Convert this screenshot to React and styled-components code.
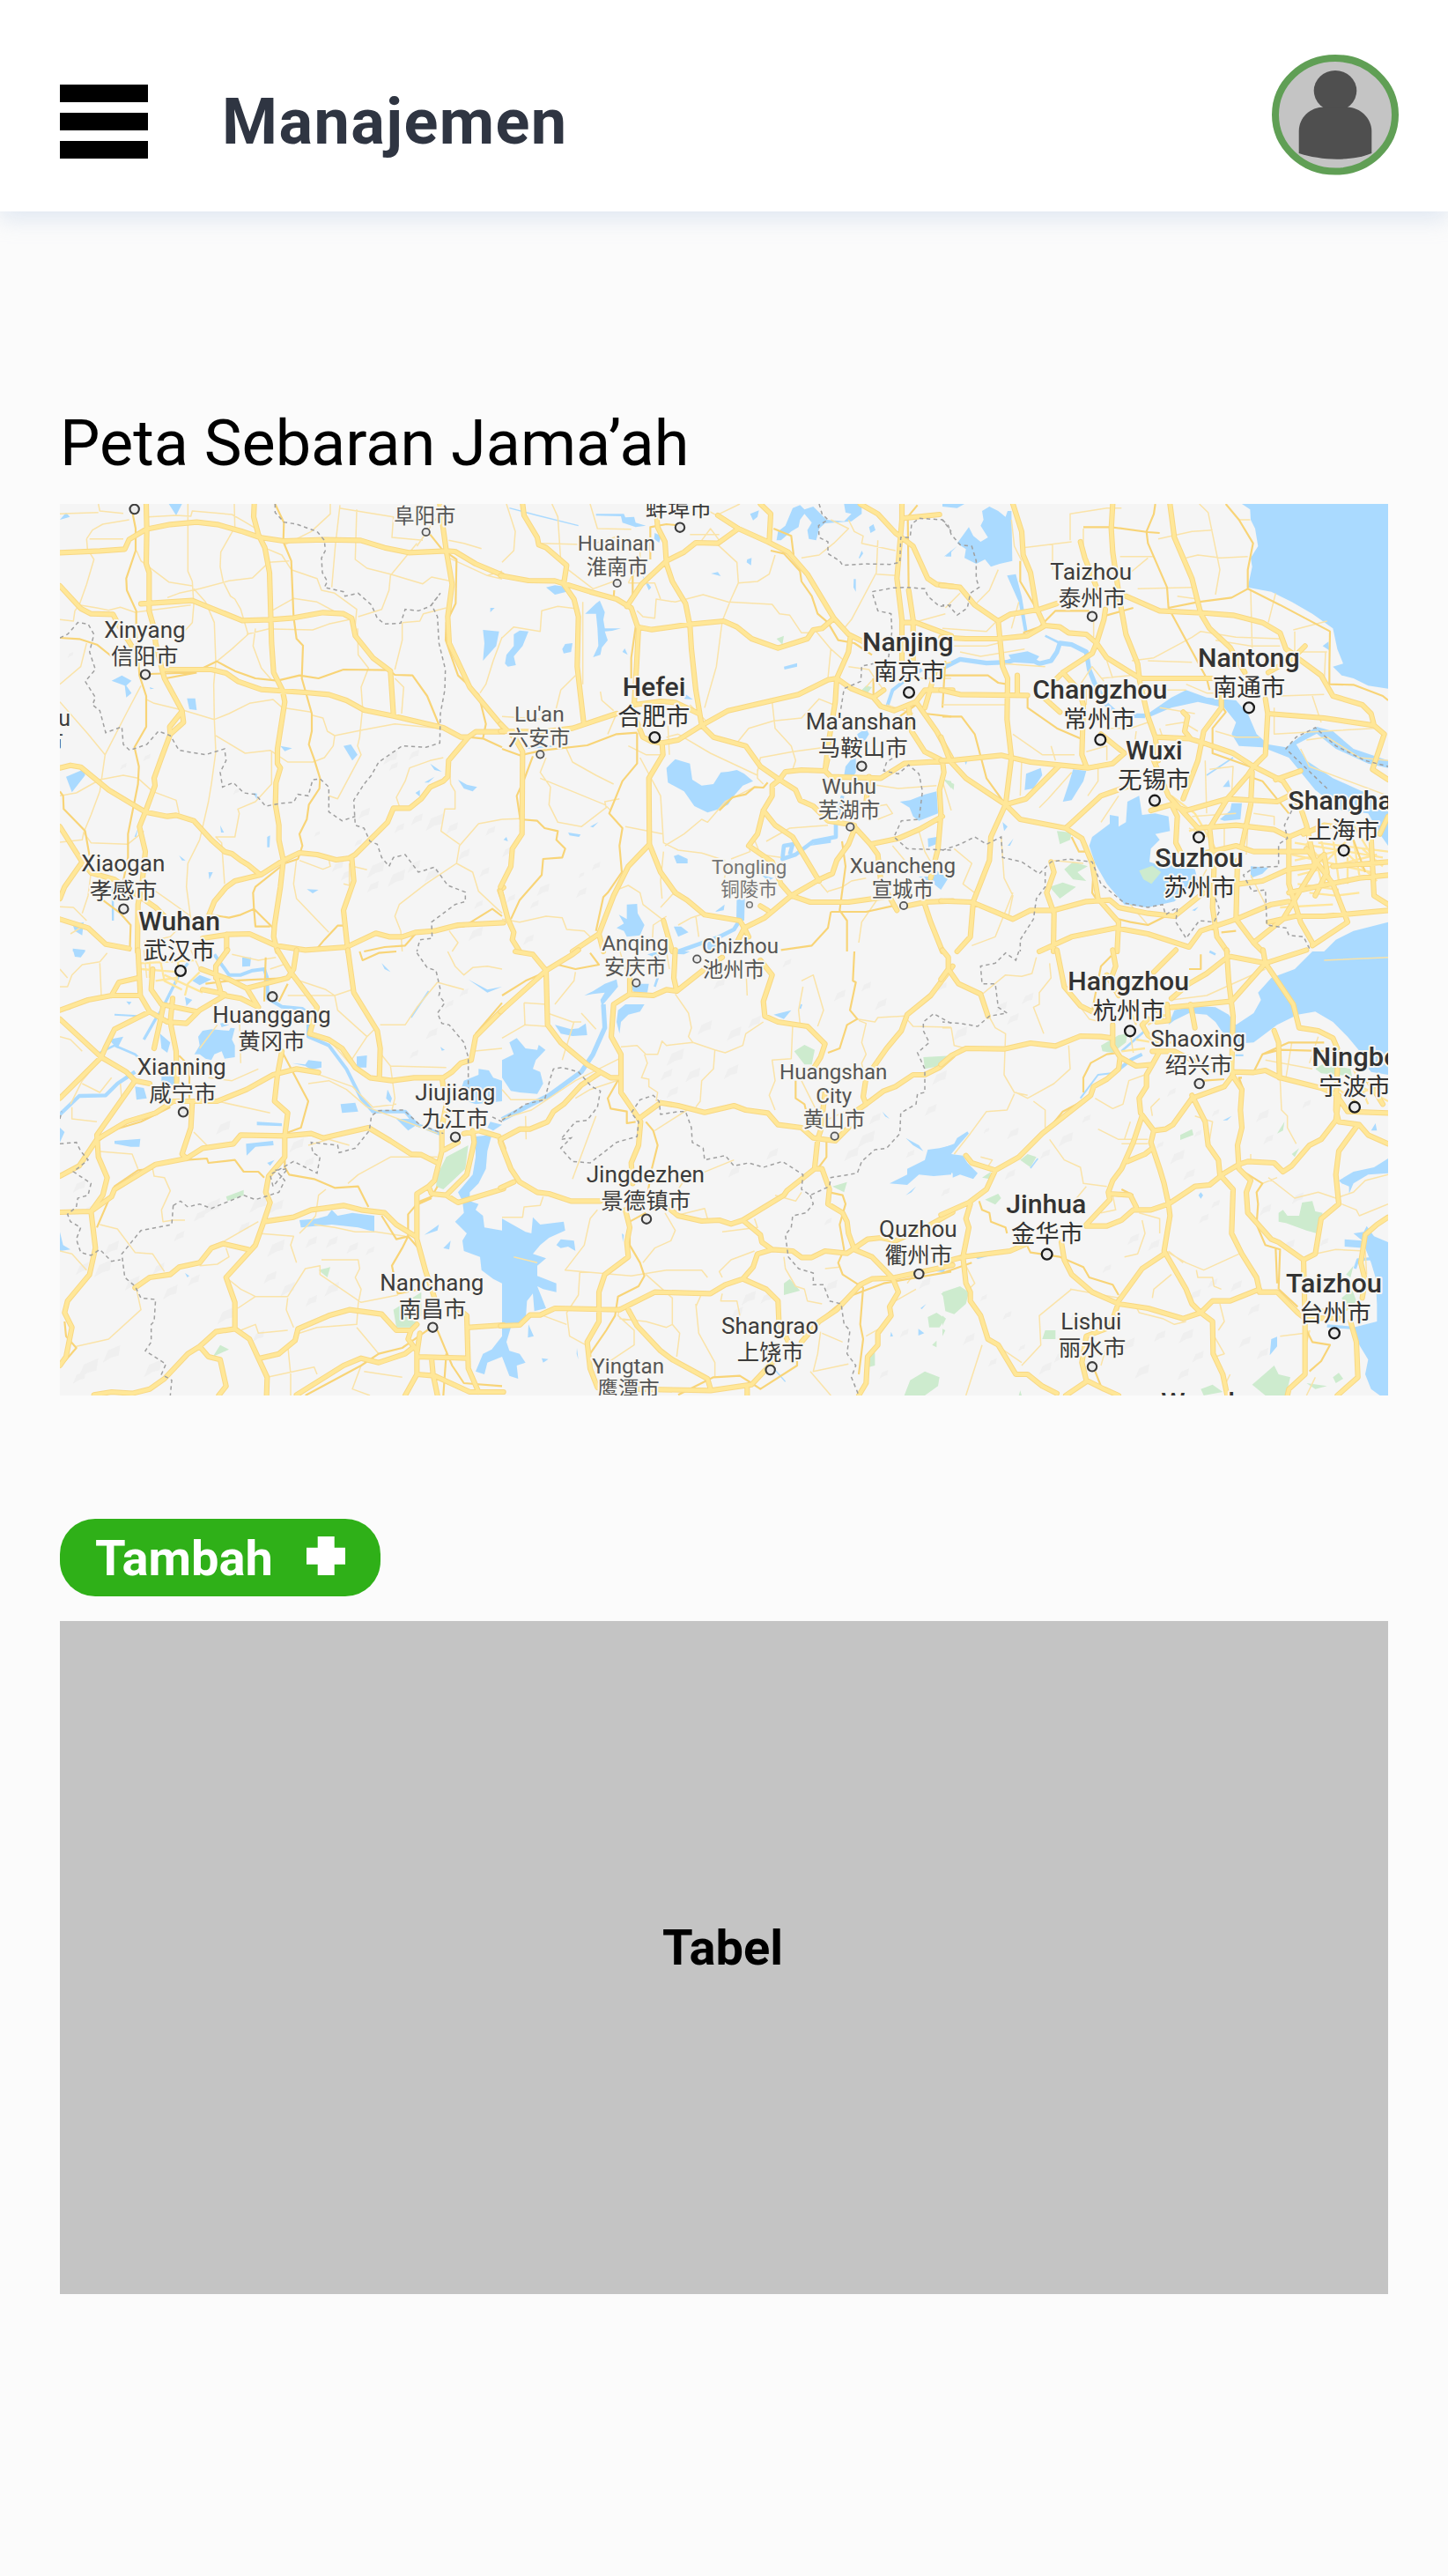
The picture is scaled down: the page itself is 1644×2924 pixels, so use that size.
import React from 'react';
import styled, { createGlobalStyle } from 'styled-components';

const GlobalStyle = createGlobalStyle`
  * { box-sizing: border-box; }
  body { margin: 0; background: #fbfbfb; font-family: Roboto, "Liberation Sans", sans-serif; color: #000; }
`;

const Page = styled.div`
  width: 1644px;
  min-height: 2924px;
  background: #fbfbfb;
  overflow: hidden;
`;

const Header = styled.header`
  height: 240px;
  padding: 0 56px 0 68px;
  display: flex;
  align-items: flex-start;
  background: #fff;
  box-shadow: 0 8px 24px rgba(181, 200, 228, 0.4);
`;

const MenuButton = styled.button`
  width: 100px;
  margin-top: 96px;
  padding: 0;
  border: 0;
  background: none;
  display: flex;
  flex-direction: column;
  gap: 12px;
`;

const MenuBar = styled.span`
  height: 20px;
  background: #000;
`;

const Title = styled.h1`
  margin: 97px 0 0 84px;
  font-size: 72px;
  line-height: 84px;
  font-weight: 700;
  letter-spacing: 1.44px;
  color: #2f3542;
`;

const Avatar = styled.svg`
  margin: 62px 0 0 auto;
  width: 144px;
  height: 137px;
`;

const Main = styled.main`
  padding: 222px 68px 0;
  display: flex;
  flex-direction: column;
  align-items: flex-start;
`;

const SectionTitle = styled.h2`
  margin: 0 0 26px;
  font-size: 72px;
  line-height: 84px;
  font-weight: 400;
  white-space: nowrap;
`;

const MapView = styled.svg`
  display: block;
  width: 1508px;
  height: 1012px;
  overflow: hidden;
  background: #f5f5f5;
`;

const AddButton = styled.button`
  width: 364px;
  height: 88px;
  margin: 140px 0 28px;
  padding: 2px 40px 0;
  display: flex;
  align-items: center;
  justify-content: space-between;
  border: 0;
  border-radius: 40px;
  background: #2fb018;
  color: #fff;
  font: 700 56px/66px Roboto, sans-serif;
`;

const PlusIcon = styled.svg`
  width: 44px;
  height: 44px;
  margin-bottom: 6px;
`;

const TablePanel = styled.section`
  width: 1508px;
  height: 764px;
  display: flex;
  align-items: center;
  justify-content: center;
  background: #c4c4c4;
  font-size: 56px;
  font-weight: 700;
  line-height: 66px;
  padding: 0 3px 22px 0;
`;

const Water = styled.path`
  fill: #aadaff;
`;
const River = styled.path`
  fill: none;
  stroke: #aadaff;
  stroke-width: ${(p) => p.$w || 12};
  stroke-linejoin: round;
`;
const Park = styled.path`
  fill: #cdebce;
`;
const Ridge = styled.path`
  fill: #efefef;
`;
const Road = styled.path`
  fill: none;
  stroke: ${(p) => p.$color};
  stroke-width: ${(p) => p.$w};
  stroke-linejoin: round;
  stroke-linecap: ${(p) => p.$cap || 'butt'};
`;
const Border = styled.path`
  fill: none;
  stroke: #a0a0a0;
  stroke-width: 4.5;
  stroke-dasharray: 13 11;
`;

const SIZES = {
  big: { latin: 29, zh: 27.3, weight: 500, color: '#333', r: 6.4, ring: 2.3 },
  mid: { latin: 25, zh: 25.4, weight: 400, color: '#3c3c3c', r: 5.7, ring: 2.1 },
  small: { latin: 23.5, zh: 23.5, weight: 400, color: '#555', r: 4.7, ring: 1.8 },
  tiny: { latin: 22, zh: 21.4, weight: 400, color: '#757575', r: 3.8, ring: 1.5 },
};

const LabelText = styled.text`
  font-family: Roboto, "Noto Sans CJK SC", sans-serif;
  font-size: ${(p) => p.$size}px;
  font-weight: ${(p) => p.$weight};
  fill: ${(p) => p.$color};
  stroke: #f7f6f2;
  stroke-width: 4px;
  stroke-linejoin: round;
  paint-order: stroke;
`;
const Ring = styled.circle`
  fill: #ececec;
  stroke: ${(p) => p.$color};
  stroke-width: ${(p) => p.$ring}px;
`;

// Map sheets: each holds its own origin and is drawn at three units per pixel.
const SHEETS = [
  {
    x: 60, y: 570,
    water: 'M24 60L45 35 58 50ZM395 6L440 6 420 45ZM200 608L235 590 268 608 250 625 268 650 250 665 245 625ZM457 668L485 668 490 708 465 705ZM1465 435L1520 440 1510 490 1465 540 1470 480ZM45 935L105 910 110 930 65 988ZM775 830L815 838 790 848ZM990 830L1015 825 1038 860 1020 880ZM1380 945L1410 962 1445 970 1430 985 1400 975ZM1235 990L1250 980 1250 1003ZM1265 955L1300 935 1280 955ZM1285 890L1325 918 1300 912ZM865 1318L905 1320 885 1332ZM530 1260L545 1260 533 1285ZM730 1140L740 1135 738 1175 730 1175ZM570 1100L583 1125 573 1125ZM430 1203L452 1220 440 1220ZM200 1300L208 1310 208 1425 201 1425ZM68 1440L105 1430 100 1475 75 1460ZM68 1520L110 1525 110 1530 68 1530ZM1490 360L1505 360 1490 375ZM330 630L345 635 332 637ZM682 990L695 992 695 1012ZM278 1140L290 1110 284 1140Z',
    highway: 'M24 172L160 166 245 160 260 127 318 92 400 76 490 68 560 76 640 98 705 120 785 132 925 128 1048 130 1130 155 1212 172 1340 166 1370 168 1440 210 1530 248M318 6L320 92 318 210 328 240 328 370 345 430 350 480 372 570 380 600 440 710 445 750 400 790 370 870 345 940 348 965 315 1055 295 1105 315 1190 305 1290 290 1370 288 1530M440 712L398 765 400 790M686 6L684 50 700 110 722 155 738 240 745 480 752 580 782 640 790 680 765 840 765 890 775 905 760 955 758 1030 770 1100 770 1150 785 1220 775 1310 755 1440 752 1480 765 1530M300 346L475 335 645 403 742 400 820 394 920 376 990 380 1018 395 1030 455 1090 530 1150 575 1160 725M24 285L95 362 130 380 205 382 225 420 275 500M372 570L540 570 590 582 630 610 710 638 860 648 940 655 1000 675 1060 708 1160 728 1330 768 1390 800 1415 800 1440 782 1535 782M1318 6L1340 165 1360 280 1345 390 1350 480 1420 630 1535 768M1415 800L1348 880 1345 935 1330 950 1285 970 1255 1010 1215 1042 1160 1042 1140 1090 1030 1200 1010 1212 965 1218 900 1200 840 1194 785 1220 710 1268 620 1290 590 1312 550 1360 530 1410M24 905L60 896 95 902 190 980 315 1055 390 1070 420 1066 480 1085 540 1150 585 1190 610 1197 640 1220 665 1235 705 1268M24 1105L100 1225 40 1310 24 1350M100 1225L130 1262 210 1285 350 1380 380 1410M24 1420L120 1450 180 1505 260 1520M510 1485L595 1472 670 1470 760 1510 860 1525 1000 1515 1100 1468 1145 1480 1190 1480 1235 1465 1300 1460 1380 1440 1535 1432M1018 1210L1025 1290 990 1390 1005 1530M592 1472L592 1530M1535 1312L1522 1322 1530 1345',
    main: 'M272 40L282 90 282 165 250 260 252 300 284 370 284 440 295 590 318 660 318 765 278 835 293 900 290 960 256 1130 256 1210 240 1290M757 6L787 70 785 135 812 200 820 390 830 465 852 488 848 600 882 720 882 780 872 825 890 875 910 940 908 975 872 1030 865 1080 840 1130 850 1170 835 1215 790 1230 690 1310 682 1330 685 1385 750 1450M24 462L90 466 150 485 200 525M330 585L480 580 558 542 620 575 690 600 765 608 840 590 905 600 990 570 1145 572 1165 588 1225 590 1275 660 1318 765M385 600L490 580M1285 110L1325 160 1375 195 1372 345 1340 410 1338 470 1380 590 1450 655 1475 755 1465 805M1415 800L1465 805 1530 835M24 985L35 1000 37 1045 110 1120 125 1205M685 1385L640 1405 600 1415 540 1405M685 1385L690 1445 740 1445M900 1520L925 1490 970 1442 990 1442M1530 1410L1497 1385 1400 1445 1340 1450M170 1355L230 1400 265 1440 262 1530M1060 1530L1130 1515 1200 1510 1235 1470',
    minor: 'M24 40L60 38 155 35M155 6L160 30 240 38M115 125L135 95 170 75 260 60M115 125L118 160 140 195 115 280 90 350 150 360 190 368 230 358 280 375 470 350M125 125L240 125M285 165L300 200 395 272 475 285M325 50L420 45 470 48 475 30 610 42 650 65 700 95M460 6L460 235 475 270 480 350 475 410 430 460M390 325L430 310 500 295 600 268 680 258 725 215 735 205 805 200M618 6L620 85 572 170 570 220 580 270 605 320 620 330 640 365 665 450 610 500 555 545 548 620 550 740 555 850 540 960 530 1020 500 1150 460 1230 455 1310 470 1420M480 295L520 340 550 410 555 545M945 6L945 40 880 100 790 145M720 155L780 180 812 230 900 260 915 300 960 310 1035 365 1030 420M978 10L962 150 950 290M1035 25L1030 195 1070 225 1150 245 1260 278 1290 255 1360 270M975 20L1160 50 1155 120 1260 130M1240 140L1150 250 1145 300 1120 365 1040 390M1348 130L1400 140 1460 158M1240 150L1285 85 1310 50M1350 190L1480 250 1530 262M742 430L660 450M690 430L682 490 710 565 745 605M750 432L885 435 940 415 1010 400M745 370L820 328 900 340 965 375M1190 410L1190 470 1165 570M1190 410L1250 405 1262 380 1340 360M1038 430L1040 520 1075 565 1050 630 1055 700 1045 800 1038 830 1050 860 970 1010 940 1000M1165 600L1195 630 1188 720M782 700L880 715M782 700L750 672 670 685 600 720 550 740 450 710 345 685 315 670M24 680L120 790 178 860 160 985 130 1065 105 1125 130 1160 255 1165 310 1120M24 1000L80 990 160 945 240 930 290 940 340 985 420 1015 430 1060M300 625L250 720 178 860M24 620L95 560 115 480M555 795L655 855 740 845 800 885 885 885 925 870 955 830 960 795 1060 775 1165 755 1315 770M882 725L920 735 935 780 960 795M745 850L745 960 690 1020 630 1045 635 1060 620 1140 555 1140 575 1160 585 1300M1530 1080L1450 1095 1385 1170 1375 1230 1270 1300 1180 1370 1165 1410 1185 1460 1190 1530M1330 870L1285 880 1215 905 1200 950 1170 1005 1180 1035M1350 890L1355 960 1370 985 1370 1045 1335 1045 1322 1120 1385 1165M1375 1230L1430 1260 1450 1325 1530 1400M830 1215L820 1300 830 1350 940 1465M840 1220L920 1250 945 1240 940 1215M1020 1240L1070 1252M990 1300L1010 1305 1010 1230M300 1290L400 1360 470 1410M24 1378L70 1380 115 1425M130 1262L120 1340 100 1400M24 1158L100 1150 105 1125M24 400L70 405 75 370 90 350M1530 460L1500 540 1475 620 1455 650M60 1470L110 1440 170 1500M310 1500L400 1480 440 1440M1350 1460L1380 1500 1360 1530M1480 250L1530 235',
    border: 'M757 6L757 35 787 68 830 75 900 100 925 130 928 165 915 190 918 240 935 270 925 290 990 305 995 320 1040 310 1085 350 1105 395 1130 415 1185 412 1200 365 1245 370 1285 355 1320 310 1290 350 1310 390 1315 480 1337 570 1335 640 1320 720 1318 820 1270 835 1190 830 1110 885 1085 930 1060 960 1025 1015 1030 1100 1060 1110 1080 1155 1105 1165 1120 1210 1145 1240 1160 1210 1200 1200 1245 1260 1300 1243 1345 1305 1405 1328 1405 1360 1370 1370 1290 1430 1292 1485 1250 1490 1240 1530M24 462L50 450 85 410 120 415 140 450 125 510 145 570 110 610 145 665 135 690 160 710 180 785 235 765 240 825 262 845 320 825 360 780 400 795 430 845 520 860 585 840 590 880 570 920 578 970 615 955 650 990 690 995 725 1035 780 1025 820 1022 835 995 870 1000 885 945 910 942 940 970 940 1055 985 1085 1030 1070',
    ridges: [[60, 520, 20], [240, 900, 22], [320, 870, 26], [625, 985, 22], [1150, 870, 50], [1230, 860, 36], [1160, 900, 30], [1060, 1060, 40], [970, 1240, 40], [1000, 1270, 40], [1040, 1160, 26], [1180, 1110, 34], [1240, 1080, 40], [1300, 1090, 60], [1360, 1110, 40], [1100, 1250, 60], [1170, 1280, 60], [1230, 1240, 44], [1090, 1310, 40], [1290, 1270, 50], [1400, 1200, 40], [1490, 1120, 34], [1470, 1260, 34], [1440, 1470, 50], [900, 1130, 20], [1450, 1370, 30]],
  },
  {
    x: 570, y: 570,
    water: 'M560 905L590 875 640 890 648 945 680 965 720 960 745 920 770 918 800 912 825 925 855 950 820 965 790 1000 770 1030 740 1045 700 1057 655 1035 620 985 565 955ZM320 40L415 40 420 52 450 50 455 70 490 80 455 85 410 70 405 48 320 46ZM520 105L542 115 535 138 518 125ZM845 40L875 28 870 50 855 62ZM835 195L850 190 848 215 833 205ZM712 243L735 238 745 252ZM935 130L940 100 965 80 990 20 1015 10 1030 25 1060 15 1085 40 1105 60 1165 65 1190 40 1170 35 1165 6 1225 6 1225 40 1190 65 1100 72 1080 90 1070 130 1045 125 1040 95 1055 70 1030 40 1015 60 1010 85 985 100 950 130ZM1250 85L1265 75 1272 95 1255 105ZM1215 190L1225 165 1230 175 1218 192ZM1198 262L1205 262 1205 305 1197 290ZM150 290L180 283 232 290 220 305 180 315ZM283 380L320 345 333 335 350 375 345 400 350 430 405 430 375 438 350 440 360 470 340 495 335 520 310 528 328 490 325 430 320 380ZM10 550L15 520 40 490 40 450 60 437 90 440 70 490 40 525 47 555 20 560ZM205 500L215 483 240 480 235 510 210 515ZM410 510L418 498 428 520ZM960 560L1005 548 1005 560 962 570ZM478 250L508 290 500 300ZM620 650L650 672 622 670ZM1190 875L1205 870 1205 920 1195 935 1165 930 1170 900ZM1210 790L1240 770 1250 790 1225 830 1215 820ZM1355 1020L1390 1015 1440 995 1480 985 1485 1060 1420 1085 1400 1070 1388 1040ZM1450 1145L1480 1140 1478 1165 1452 1175ZM1418 1275L1470 1275 1480 1255 1520 1280 1495 1320 1470 1300ZM585 1205L600 1200 632 1215 632 1230 595 1230ZM225 1125L268 1132 262 1140 230 1135ZM300 1105L328 1090 310 1108ZM5 1150L15 1140 20 1155ZM398 1405L425 1420 425 1370 460 1368 462 1400 485 1440 470 1475 425 1480 415 1460 390 1450 415 1435ZM585 1445L610 1445 635 1465 600 1480ZM725 1395L758 1370 755 1390ZM800 1320L828 1310 825 1425 798 1425ZM1530 165L1510 185 1530 185ZM885 1270L925 1280 905 1290ZM1080 1150L1120 1145 1120 1160 1050 1170ZM690 1500L720 1485 750 1530 690 1530Z',
    river: [['M1430 570L1375 605 1330 640 1310 700', 12], ['M1137 1095L1137 1140 1060 1155 1000 1200 955 1215 960 1170 990 1165 980 1200', 14], ['M812 1420L790 1455 740 1480 600 1530', 14], ['M25 20L120 45 260 80', 4], ['M1160 1000L1140 1080 1137 1100', 12], ['M80 838L180 830', 5]],
    park: 'M935 465L960 455 955 485ZM1225 640L1240 625 1260 630 1245 650ZM1505 945L1530 950 1530 975Z',
    highway: 'M70 6L75 45 120 120 125 145 150 155 220 215 210 280 245 330 260 390 256 560 278 750M-5 250L90 267 180 268 300 305 390 330 440 360 462 425 510 434 640 416 755 405 800 425 850 465 940 497 1040 465 1060 435 1090 430 1125 400M525 30L530 85 555 135 560 210 580 270 625 345 640 420 645 500 660 640 680 760M425 355L475 280 560 200 620 170 660 138 735 140 805 90M735 45L805 90 905 135 975 170 1040 245 1130 395 1180 450 1230 475M880 6L915 40 910 135M465 425L458 560 450 690M450 690L540 678 590 682 670 720M-5 780L140 782 240 770 390 720M-5 755L45 805 70 850 68 1130 35 1180 30 1240 -5 1310M-5 1325L20 1420 40 1465 35 1490 60 1530M680 760L600 810 545 820 510 815 480 800 460 750M680 760L770 710 900 680 1010 655 1110 605 1140 600 1180 510 1187 455M680 760L720 800 830 830 880 900 945 945 1000 980 1015 1015 1060 1035 1110 1085 1200 1100M545 820L548 860 500 940 502 1165 540 1260 590 1330 630 1355 690 1405 810 1425 825 1450 895 1415 985 1340 1080 1285 1125 1265 1140 1220 1180 1165 1200 1115M502 1165L430 1240 380 1340 330 1470 240 1530M945 945L920 965 920 1000 890 1050 870 1130 840 1170 920 1225 950 1300 985 1340 1050 1362 1180 1362 1300 1345M890 1050L930 1100 990 1140 1050 1240 1080 1290M945 945L965 918 1020 912 1100 915 1110 870M1100 915L1120 935 1290 940 1370 890 1535 880M1140 600L1135 680 1115 800 1100 915M1140 600L1190 635 1265 665 1300 640M1265 665L1290 695 1335 710 1410 680 1440 640 1535 640M1220 6L1280 40 1340 105 1400 150 1450 260 1480 280 1535 287M1362 6L1362 60 1345 260 1362 400 1362 540M1385 300L1400 400 1400 560M1362 410L1410 410 1530 455M1362 55L1490 42M1200 1105L1255 1165 1280 1200 1290 1290 1345 1390M1255 1165L1350 1145 1420 1115 1500 1070M1500 880L1505 920 1490 980 1495 1060 1485 1180 1460 1280M1440 1370L1460 1430 1500 1530M1380 1375L1440 1362 1535 1358M1385 700L1395 780 1440 850 1500 880M1410 680L1480 780 1530 870M1480 560L1440 700M1250 935L1240 1020M550 1425L580 1530M330 1470L345 1530M880 1375L905 1390M825 1450L800 1500M825 1450L840 1480',
    main: 'M0 840L60 862 140 845 290 828 390 790 460 785M105 865L75 945 50 1000 62 1080 120 1085 145 1110 190 1120 185 1150 215 1180 205 1210 140 1215 135 1270 60 1355 30 1420M460 785L460 890 410 950 365 1060 410 1110 400 1170 408 1260 360 1330 345 1345 320 1460M455 425L440 530 440 600M505 195L505 85 560 75 610 80M380 330L382 300M925 90L985 115 993 180M915 165L960 175 1015 235 1020 270 1055 320 1075 380 1110 410 1145 470 1200 480 1260 520M905 955L890 972 860 970 830 995 785 1005 740 1050M1158 1155L1165 1205 1170 1240 1150 1390 1175 1425 1175 1530M1120 1395L1240 1395 1330 1375M1120 1395L1110 1450 1055 1510 950 1525M445 330L445 240M1415 10L1382 50 1385 300M1440 720L1530 730M1410 690L1340 740M1265 600L1265 665M1510 540L1500 700',
    minor: 'M15 6L45 100 40 165 0 205M170 6L190 50 200 200M130 140L300 145 400 115M225 230L310 295 380 270M0 462L40 425 130 440 135 370 190 355 250 362M275 340L275 620M0 730L150 740 180 720 200 640 250 590M300 6L325 90 440 92M460 370L480 390 520 395 525 330 590 340 685 315 770 340 920 348 945 380 980 385 1020 445 1050 445M735 145L800 205 805 275 780 330 750 405 730 560 690 700M640 110L740 110M680 130L710 90 740 130M805 275L870 270 910 245 930 180M660 6L740 50M810 6L740 40M430 275L520 275 540 330M1120 60L1180 90 1130 140 1080 180 1020 190M1180 60L1200 100 1230 115 1225 140 1340 165M1280 130L1275 240 1190 400 1165 430M1275 245L1345 250M1070 440L1120 500 1165 540M1120 500L1110 600M335 645L340 675 380 710M390 720L360 790M215 830L240 885 320 930 380 960M150 870L130 920 165 970 160 1030 190 1090 270 1105 355 1040 350 1020 400 1010M130 940L240 985 350 1030 370 1050M420 1105L550 1130M470 870L540 1000 550 1160 600 1185 680 1195 760 1220M555 1170L620 1130 680 1080 700 1090 760 1020 860 970M600 790L710 855 870 930M640 690L700 750M800 820L840 770 925 745 1020 735 1080 670 1130 690M920 680L930 770 985 830 1000 880 990 910M870 920L880 870 990 850 1100 835M1250 960L1350 975 1480 965M900 1155L980 1110 1110 1100M780 1215L845 1190 840 1170M860 1150L880 1200 950 1210M550 1190L540 1290 545 1350M540 1380L595 1320M380 1325L430 1305 470 1330 480 1370 545 1420M510 1530L515 1440 560 1410M0 1420L60 1430 150 1410 205 1415 220 1455 280 1460 300 1480M770 1230L755 1290M660 1410L670 1480M690 1400L645 1415 600 1440M1110 1325L1160 1310 1190 1290 1240 1280M1280 1350L1225 1430 1215 1500M1085 1300L1110 1330M1340 770L1390 740M0 1080L60 1078M1300 560L1240 630M1310 690L1400 720M1500 950L1530 1050M1280 1080L1330 1060 1310 1030 1250 1040M1180 560L1250 570 1270 600 1300 640M470 140L470 200 430 275M560 800L600 790M565 760L570 860M430 830L490 860 540 860M1420 1120L1440 1190 1480 1260M1330 1170L1380 1230M870 910L870 940 890 960M1400 410L1510 380M1450 560L1530 545M1400 600L1530 600',
    border: 'M1080 6L1090 40 1110 60 1078 80 1080 120 1110 135 1110 175 1150 200 1160 215 1235 210 1320 212 1355 205 1358 120 1390 120 1395 75 1420 55 1500 60 1530 100M1530 350L1490 355 1450 320 1440 295 1380 290 1330 292 1260 305 1280 370 1325 380 1328 440 1315 540 1225 558 1222 610 1165 635 1150 730M1350 860L1310 885 1300 915 1350 925 1385 895 1420 925 1432 985 1420 1080 1360 1085 1335 1140 1380 1180 1530 1185',
    ridges: [[20, 1190, 40], [140, 1320, 44], [270, 1330, 36], [320, 1240, 30], [110, 1370, 30], [90, 1490, 36], [270, 1270, 20], [30, 1350, 30]],
  },
  {
    x: 1070, y: 570,
    water: 'M1020 6L1518 6 1518 635 1450 625 1400 600 1360 590 1330 560 1365 550 1345 500 1330 430 1260 380 1190 340 1120 305 1040 290 1055 220 1050 190 1075 150 1065 90 1050 60 1048 25ZM235 30L238 200 195 210 165 220 145 195 115 210 75 190 80 160 50 140 90 85 105 115 130 135 155 120 130 80 140 60 135 30 160 15 190 30 215 50 222 30ZM0 6L75 6 50 20 0 15ZM5 185L50 150 20 180ZM220 250L250 245 270 320 290 440 278 440 260 340ZM650 735L700 720 780 665 830 640 900 665 1000 675 1040 720 1070 790 1110 825 1170 835 1215 800 1275 765 1330 780 1400 840 1518 880 1518 905 1450 890 1340 840 1275 788 1205 825 1240 880 1330 940 1420 980 1518 1020 1518 1170 1490 1130 1450 1060 1360 1050 1270 980 1180 870 1090 835 1010 830 985 790 1000 750 960 700 870 680 780 700 710 730ZM500 1170L510 1140 570 1095 570 1065 600 1070 600 1105 625 1090 630 1020 670 1000 680 1065 725 1060 770 1070 775 1120 725 1130 740 1150 710 1180 705 1225 750 1240 780 1190 800 1230 860 1250 870 1290 830 1320 790 1360 700 1380 620 1370 560 1300 520 1230ZM280 980L285 925 335 905 340 930 310 975ZM410 1020L430 960 445 910 490 915 480 950 440 1015ZM945 1080L980 1050 985 1025 1020 1025 1015 1080 960 1085ZM955 970L975 945 980 970ZM1050 1280L1050 1240 1110 1245 1090 1265ZM1300 1530L1340 1490 1400 1460 1518 1430 1518 1530ZM1295 490L1315 475 1318 505ZM205 1090L222 1105 210 1120ZM222 1170L242 1145 230 1170ZM225 520L290 508 330 525 310 550 240 545ZM75 880L85 880 80 895ZM850 1390L872 1378 860 1392Z',
    river: [['M0 565L60 535 150 548 220 545 280 525 330 550 370 540 390 510 400 480 440 485 490 510 500 570 520 620 560 690 600 725 690 728', 16], ['M350 455L400 480', 8], ['M900 930L990 870', 5]],
    park: 'M390 1120L440 1125 435 1150 400 1165ZM415 1250L445 1225 495 1240 460 1260 490 1290 445 1285ZM365 1310L410 1295 455 1310 400 1350ZM0 940L40 960 38 980Z',
    islands: 'M670 1255L715 1238 745 1260 712 1300 685 1285Z',
    highway: 'M240 6L270 100 275 180 300 240 320 360 345 415M580 6L575 90 580 170 605 340 625 450 665 550 672 610 700 730 725 800 735 880M775 6L790 120 850 260 880 380 910 430 980 495 1030 580M-5 283L60 290 110 350 190 405 205 560 222 600 220 740 235 870 215 1030 165 1140 160 1220 105 1360 95 1480 50 1530M190 405L230 382 330 365 390 345M625 320L740 370 900 378 990 385 1090 410 1150 445 1170 500 1200 520M1235 490L1195 530 1110 580M-5 460L80 465 190 465 290 455 350 420 400 425 430 445 490 450 525 480 560 530 665 595 680 600 940 600M525 480L550 400 555 365M525 480L510 515 410 580 390 600M470 135L485 190 525 290M-5 640L60 655 290 658M255 590L255 655M345 665L400 715M410 580L465 640 480 690 475 860 490 900M-5 880L25 880 200 862 300 885 495 905 580 890 620 855 540 790M-5 800L25 880 80 940 215 1030 265 1080 420 1110 475 1145 510 1230 530 1350 600 1430 595 1530M215 1030L285 1010 395 900M420 1110L540 1000 640 965M725 800L840 805 890 820 990 855 1060 900 1160 950 1220 1040 1240 1100M820 715L835 730 825 780 845 805M950 660L950 700 890 780 870 880 820 1010M1060 900L1100 860 1108 720 1100 670M1108 720L1300 735 1470 760 1505 790 1465 910 1518 945M1215 535L1290 590 1330 660 1430 690 1460 720 1470 760M1220 915L1135 945M1060 900L1040 930 970 1010 910 1110M1055 920L1050 1030 1020 1170M720 880L770 1000 870 1110M710 1050L780 1030 830 1050 970 1010 1140 1020 1180 1000M780 1030L800 1070 795 1160 810 1190M870 1110L1000 1100 1130 1115 1180 1140 1240 1115M910 1110L925 1250 920 1380 935 1480 970 1530M870 1200L1000 1170 1060 1190 1240 1190M-5 1358L100 1362 240 1420 300 1390 380 1390 490 1360 570 1355 600 1380 700 1400 790 1410 890 1330M370 1225L380 1260 355 1330 380 1400 378 1530M330 1530L440 1480 590 1450 700 1470 840 1515 880 1460 1000 1420 1120 1370 1180 1360M1005 1220L1000 1420 1060 1500 1090 1530M1010 1300L1090 1290 1180 1250 1260 1240 1300 1200M1180 1140L1180 1300 1220 1430 1260 1500M1240 1100L1270 1240 1220 1320 1160 1420 1060 1500M1240 1180L1330 1300 1380 1430 1260 1510M1180 1330L1270 1310 1420 1280 1518 1270M1110 1430L1200 1410 1300 1410 1518 1390M1330 1240L1518 1225M1460 1140L1470 1340 1518 1370M1300 1200L1310 1260 1270 1340M1230 1130L1300 1100 1380 1110M1518 1070L1490 1130',
    main: 'M725 6L720 40 695 100 700 140 765 290 770 360 900 600 910 640M480 85L575 85 700 102 740 105M965 6L1010 60 1058 140 1040 230 1040 295 985 325 870 340 770 360M1040 295L1150 350 1320 440 1318 560 1318 620 1400 622 1500 660 1518 675M0 590L155 590 190 615 220 620M275 445L330 425 385 370 500 370M265 200L265 270 330 380M560 385L650 360M290 665L290 700 390 770 470 805M0 730L65 730 110 790 150 940 215 1030M955 700L965 715 920 770 920 855 990 880 1060 905M530 1360L510 1330 515 1250M440 1140L465 1190 490 1190M600 1420L640 1430 700 1440 760 1410M950 1465L1000 1460M1060 940L1090 950 1180 1060M1400 1150L1440 1260M1518 1500',
    minor: 'M275 155L440 135M375 145L375 230M435 130L435 40 560 20 610 20M480 90L480 160M605 185L720 185M640 240L700 190M665 295L850 290M735 125L850 100 920 95M875 6L905 35 945 230 930 315M830 190L870 180 950 190 1040 185M1010 60L1048 60M800 320L870 330M1050 300L1055 500M1135 310L1110 410M1195 435L1310 405M1200 440L1200 510 1310 510M645 540L720 530 850 460 880 440 1000 460 1150 465M930 470L1050 490 1150 490M515 390L515 460M0 430L150 440 190 400M40 490L150 490 190 480M60 510L130 525 280 500M205 550L350 560M235 430L260 340M470 620L510 560 550 610M560 540L580 600M540 600L640 590M490 620L490 690M0 690L220 690M700 540L850 545M830 620L900 650 940 650M760 760L820 750 870 780M740 770L750 800M1150 660L1300 655M1130 700L1130 790 1300 780 1470 770M1260 660L1290 750M1305 510L1300 620M930 780L1000 800 1080 800M560 770L640 770 700 750M660 780L650 860M240 790L340 860 450 860M370 830L385 880M490 850L560 830 560 880M440 920L360 1010 330 1040M270 880L265 1000M530 900L530 950 495 1000M540 1090L600 1000M895 880L900 1060M910 910L990 900 985 1000M840 1110L900 1140M850 1070L1000 1060M1060 1060L1130 1070 1130 1100M1040 1110L1035 1200M960 1110L960 1170M945 1200L1000 1250 1000 1290M200 1140L210 1280 240 1340 225 1410M40 1180L100 1230 70 1300 110 1330M380 1220L480 1230M240 1330L180 1480 100 1510M640 1370L700 1440M900 1250L850 1340M1050 1270L1100 1370M1220 840L1250 900 1518 1000M1240 810L1310 800 1420 870 1518 880M235 60L245 150 270 200M190 230L160 300 110 350M10 360L60 310M690 640L830 640M740 700L860 720',
    mesh: 'M1200 1160L1500 1210M1190 1200L1460 1260M1250 1130L1290 1290M1330 1140L1350 1290M1400 1150L1420 1270M1210 1270L1480 1200M1280 1160L1518 1190M1300 1230L1400 1130M1400 1100L1460 1200M1240 1160L1300 1230M1290 1150L1320 1280M1360 1180L1480 1290M1200 1220L1340 1190M1380 1210L1380 1300M1250 1330L1340 1340 1420 1330M1210 1300L1350 1320M1430 1180L1500 1240M1150 1380L1330 1370M840 1120L900 1100M860 1060L930 1180M780 1000L860 1060',
    border: 'M0 60L20 80 30 110 60 145 100 150 115 200 115 260 125 290 95 310 85 360 50 385 20 350 0 350M1310 975L1170 840 1205 800 1270 768 1340 830 1440 880 1518 900M1190 1050L1165 1100 1175 1145 1145 1165 1145 1240 1060 1245 1025 1270 1055 1325 1100 1320 1105 1440 1170 1450 1180 1475 1230 1480 1255 1530M0 1185L60 1165 110 1140 150 1165 200 1140 205 1210 270 1225 330 1265 370 1225 430 1215 510 1225 540 1300 620 1365 700 1380 750 1370 760 1405 800 1380 795 1430 830 1485 875 1425 925 1430 945 1390 930 1350M350 1260L350 1310 320 1350 310 1420 265 1490 265 1530',
    ridges: [],
  },
  {
    x: 60, y: 1080,
    water: 'M495 290L510 270 540 265 600 270 605 260 620 262 610 300 620 320 620 360 585 365 575 340 550 350 540 370 520 365 500 350 482 350 500 320ZM645 20L675 20 672 50 645 52ZM365 280L400 310 390 345 370 330ZM190 300L240 290 220 330ZM450 155L475 165 455 185ZM475 100L500 80 540 95 500 115ZM370 425L420 420 415 460 370 450ZM280 460L310 465 320 500 285 505ZM815 380L860 385 870 370 915 375 915 395 880 403 860 390ZM1035 358L1070 354 1068 395 1035 395ZM1140 470L1155 500 1150 515 1135 500ZM980 520L1030 515 1040 545 985 550ZM1170 570L1225 570 1240 590 1210 610ZM1380 500L1400 440 1450 420 1450 400 1485 405 1500 430 1530 440 1530 510 1440 520ZM1440 630L1495 625 1480 680 1475 740 1450 790 1420 820 1420 850 1450 860 1440 880 1465 900 1470 940 1530 950 1530 1130 1500 1115 1460 1085 1455 1040 1400 1020 1395 985 1410 960 1370 920 1400 890 1395 850 1380 820 1430 760 1440 700ZM210 645L298 638 295 665 265 665 210 655ZM658 655L750 645 752 660 690 665 660 695ZM695 580L780 585 780 595 695 592ZM840 915L900 910 935 900 950 880 970 900 1020 890 1095 900 1095 955 1040 940 950 930 845 940ZM1265 965L1315 930 1310 950ZM1330 1010L1355 985 1350 1015ZM1440 1430L1465 1370 1495 1355 1530 1310 1530 1380 1480 1400 1470 1440ZM24 955L35 1000 60 1015 24 1020ZM1120 40L1150 70 1130 60ZM1415 95L1480 130 1530 120 1480 140ZM24 600L40 615 24 650ZM730 720L755 710 740 730ZM1320 325L1335 335 1325 338ZM70 0L110 0 95 20 75 18ZM450 1095L465 1105 458 1110ZM570 245L590 240 600 250 575 258ZM250 170L268 172 260 182ZM1490 580L1530 590 1500 610 1480 600Z',
    river: [['M550 10L600 80 640 80 680 65 720 60 730 90 732 160 780 188 850 195 870 210 870 290 940 320 1000 400 1050 500 1090 545 1200 545 1240 590 1330 625', 12], ['M24 555L90 492 180 490 220 450 280 410', 13], ['M310 300L350 230 370 200 430 80 460 40', 10], ['M210 215L290 220', 6], ['M1280 135L1220 225', 6], ['M150 350L210 320 280 350 300 370', 8]],
    park: 'M1310 760L1340 700 1415 660 1405 740 1330 810 1305 800ZM590 835L650 812 650 830 595 850ZM905 1085L945 1075 935 1110ZM1160 1220L1255 1160 1255 1240 1220 1280 1170 1280ZM545 1380L570 1340 600 1355Z',
    highway: 'M290 -5L295 90 298 150 330 205 390 240 455 245 500 200 585 150M24 200L120 165 200 150 298 150M200 150L225 105 290 90M340 60L335 130 370 180 490 205M375 190L365 240 345 330M408 160L400 240 420 340 422 450M24 230L165 360 250 410 280 440 330 450M330 205L210 265 180 325 165 360 24 500M280 440L150 625 155 700 185 770 170 830 130 885M24 888L130 885 145 1010 125 1100 50 1190 40 1230 65 1280 45 1380 24 1410M24 765L90 730 150 640 250 580 350 550 410 510 560 510 660 470 750 420 830 400 905 412M475 510L470 600 440 690 455 705M130 885L200 835 210 810 350 725 455 705 510 670 615 655 640 625 790 628 880 620 920 635 1075 600 1150 645 1220 690 1255 692 1310 720M780 340L765 420 755 510 800 550 790 628 790 700 735 765 725 820 740 855 715 930 690 1000 590 1110 620 1195 620 1285 670 1320 730 1450 728 1512M720 920L820 905 880 880 920 875 990 865 1050 880 1130 890 1170 930 1235 970M665 1015L580 995 540 1010 500 1060 430 1075 400 1100 330 1110 280 1145M620 1285L555 1295 500 1345 460 1370 380 1455 330 1490 270 1505 200 1500 140 1510M500 1345L530 1380 570 1390 590 1480 565 1512M705 1385L770 1370 825 1325 835 1285 940 1240 1010 1220 1120 1235 1170 1290 1220 1290 1240 1270M830 1510L990 1410 1050 1385 1110 1400 1200 1370 1225 1350M1220 1290L1210 1320 1240 1360 1240 1440 1200 1512M1240 1380L1410 1385M1250 1300L1240 1370M1240 1440L1300 1445 1420 1500 1535 1500M1290 1385L1295 1440 1310 1512M1360 1200L1410 1240 1415 1420 1450 1500M1420 1280L1535 1272M765 -5L810 70 840 110 900 190 875 280 940 300 985 330 1030 395 1080 430 1155 440 1230 430 1330 430 1360 410 1390 380 1425 370 1440 290 1535 195M505 60L600 95 660 125 720 110 800 90 820 60 830 -5M660 125L700 190M585 150L640 160 700 190M555 75L575 150M595 -5L555 50 555 90M1005 -5L1025 140 1105 270 1115 330 1112 435M1325 430L1340 520 1325 600 1325 680 1300 780 1280 800 1240 825 1240 980 1270 1090 1300 1180M1280 800L1290 825 1340 830 1380 855 1535 808M1340 830L1410 760 1435 650 1430 610M1400 620L1450 610 1520 630 1535 670M1325 680L1380 650M510 130L585 145',
    main: 'M430 355L465 390 465 500M24 198L60 195M780 340L870 510 845 600 790 620M455 710L525 705 530 720 620 710 650 750 700 750 720 770M790 700L790 735 805 760 890 775 960 805 1040 800 1075 870M150 940L210 800 290 745 340 740M1240 860L1210 895 1210 970 1190 1010 1155 1070 1175 1165 1250 1150M1120 900L1170 980 1210 970 1245 1010M860 1512L1050 1410 1110 1370 1190 1350 1290 1280M520 110L600 100 800 90M725 20L720 170M770 170L800 110M1310 800L1290 835 1240 855M1310 1290L1360 1410 1400 1470 1530 1480M1340 1370L1330 1512M40 1260L45 1310 80 1350 24 1415M1530 175L1440 280M150 650L200 610 300 580 400 530M1045 0L1055 30 1110 5 1170 0M1245 860L1290 840',
    minor: 'M24 120L50 120 65 80 100 45 160 35 185 5M160 40L165 150M24 290L60 300 100 340M65 530L65 570 150 580M60 520L100 440 160 370M230 450L235 510M100 450L160 480 200 430M150 680L270 690 290 740M340 740L345 765 380 770 400 815 370 880 375 920 410 915 450 915M160 930L220 945 280 1025 340 1030 380 1090M285 1150L300 1220 190 1320 80 1345M24 1020L65 1030 115 1085M480 615L530 665M530 430L610 440 700 400M560 510L740 550M635 200L640 380M740 60L800 40M800 150L960 150 930 130 840 100M960 150L970 200 1070 290 1100 260M960 150L1020 130M940 300L1010 380 1070 290M1115 250L1200 250 1240 190 1310 105M1110 340L1150 390 1340 395M1150 390L1165 500 1155 540M880 410L1020 460 1090 530 1170 520M870 450L940 440 1000 470 1070 530 1310 620M870 660L940 640 1010 660M1310 700L1150 700 1040 760 1005 790M930 810L905 830 895 900 870 930 840 960M890 930L960 940 1030 955 1100 955 1200 970M700 960L820 970 810 1000 830 1060M590 1110L640 1150 690 1175 800 1175 860 1080 910 1070 910 1100 1050 1195 1175 1170M915 1050L1040 1050 1045 1080 1030 1110 1050 1150 1040 1200 1035 1270 900 1280 840 1300M690 1175L630 1215M800 1180L795 1220 820 1280M800 1340L810 1440 810 1512M730 1450L890 1415 900 1440M1060 1430L1190 1450M1035 1280L1110 1370M1050 1410L1020 1490 1080 1512M640 1290L690 1270 700 1300 800 1290M500 1070L560 1065 600 1040 590 1010M1345 0L1370 50 1400 80 1430 55 1480 50 1530 60M1310 105L1400 130M1430 340L1530 330M560 1000L700 920M470 -5L500 60M310 -5L320 90M610 10L700 30 760 20M500 330L560 250M24 60L50 90',
    mesh: 'M360 0L380 100 440 130M300 60L430 70M350 100L420 90M300 40L480 30M380 80L510 140M430 10L420 110M450 150L460 110 500 70M330 0L330 90',
    border: 'M1240 5L1275 55 1305 65 1320 130 1315 150 1335 175 1310 210 1325 245 1350 250 1400 310 1415 360 1415 470M24 655L80 650 95 680 120 710 70 750 130 790 120 830 85 840 80 870 50 895 60 920 95 940 80 980 95 1025 130 1035 160 1015 200 1055 230 1050M24 570L30 545M1530 580L1490 560M410 865L435 850 460 870 500 860 540 875 650 830 690 845 770 820 790 780 760 745 800 740 750 800 740 760 820 715 860 735 900 755 910 700 885 685 880 650 970 660 975 685 1030 670 1078 610 1085 560 1110 542 1195 540 1250 590 1330 620M410 865L405 930 300 950 235 1030 245 1110 280 1140 300 1180 350 1185 345 1260 335 1270 335 1330 315 1360 385 1405 370 1440 405 1460 400 1512',
    ridges: [[120, 1420, 70], [200, 1370, 60], [90, 1450, 44], [170, 1080, 60], [200, 1010, 50], [100, 1080, 44], [270, 1130, 50], [400, 1160, 50], [480, 1120, 40], [90, 800, 44], [120, 880, 30], [580, 600, 50], [540, 870, 60], [700, 860, 60], [760, 870, 50], [830, 660, 50], [870, 720, 40], [650, 940, 40], [760, 1010, 60], [800, 1150, 50], [880, 990, 40], [950, 990, 40], [1020, 1010, 40], [740, 1110, 44], [950, 1150, 50], [1290, 280, 40], [1350, 180, 30], [1230, 350, 30], [1400, 140, 30], [590, 1240, 60], [700, 1310, 40], [340, 1420, 60], [500, 900, 40], [360, 1080, 40], [880, 1190, 40], [1080, 1020, 30], [1350, 770, 36], [430, 970, 36]],
  },
  {
    x: 570, y: 1080,
    water: 'M0 370L40 350 25 310 50 295 80 330 120 335 125 318 148 335 115 370 105 400 130 410 140 450 120 485 60 480 30 475 0 430ZM180 250L235 265 260 262 285 245 290 285 240 288 200 280ZM280 150L310 135 350 110 390 95 395 120 370 150 340 185 335 165 350 140 310 145ZM395 200L420 180 485 180 470 205 430 215 405 240 400 280 390 240ZM430 110L500 110 495 140 450 140ZM925 215L985 200 960 230ZM0 910L80 955 100 960 105 905 130 930 210 920 215 950 160 975 130 1000 105 1030 150 1045 120 1070 120 1105 185 1130 185 1160 140 1150 120 1140 150 1215 110 1225 105 1165 85 1190 80 1260 60 1280 30 1280 15 1330 25 1360 60 1370 80 1400 50 1410 55 1455 25 1445 0 1380ZM185 1000L200 980 245 985 250 1020 225 1005 200 1010ZM90 1270L108 1310 88 1315ZM408 960L415 965 412 990ZM255 1350L260 1390 254 1370ZM135 1385L158 1388 140 1400ZM1320 790L1380 760 1380 740 1440 710 1450 675 1490 670 1530 660 1530 760 1470 765 1420 760 1380 795ZM1375 635L1420 660 1435 680 1400 660ZM1375 830L1410 800 1395 820ZM1295 545L1320 570 1305 562ZM1425 1215L1445 1200 1430 1218ZM1325 1295L1332 1310 1322 1312ZM1418 1285L1438 1300 1418 1308ZM1480 1090L1510 1080 1505 1092ZM570 0L640 0 620 10 580 8ZM495 10L530 0 540 40 520 20Z',
    river: [['M345 180L350 260 310 350 270 410 160 490 100 520 0 572', 16], ['M530 90L520 120', 8], ['M1020 180L1015 195', 6], ['M930 1425L965 1465', 4]],
    park: 'M995 340L1030 318 1065 335 1055 385 1030 385ZM1435 360L1530 355 1490 390 1440 400ZM1125 800L1175 785 1165 820ZM960 1130L980 1115 1015 1155 960 1170ZM1370 1512L1390 1460 1440 1430 1490 1450 1485 1480 1440 1512ZM1450 1245L1480 1230 1510 1250 1490 1280 1455 1280ZM1495 1165L1530 1155 1530 1205ZM1252 1380L1270 1365 1270 1410 1250 1415ZM1465 1340L1480 1325 1480 1348Z',
    highway: 'M45 0L105 10 150 65 155 250 200 310 290 385 370 430 400 430M150 65L-5 205M150 65L240 10 260 -5M435 145L380 180 372 290 405 350 405 480 460 560 472 580 465 660 440 720 445 790M435 145L515 150 560 130 595 135 690 60 750 20M435 145L435 80M595 135L585 90 590 -5M880 30L920 80 890 170 895 220 940 240 1040 255 1100 315 1085 360 1060 400M1100 480L1085 610 1075 640 1065 735M465 570L540 515 600 525 690 548 790 525 830 540 905 550 940 590 1020 600 1060 635 1135 645 1180 600M1535 50L1460 150 1380 215 1360 270 1310 330 1240 430 1230 495 1240 520M1180 560L1240 520 1300 475 1340 460 1400 420 1440 420 1490 395 1535 355M-5 640L60 605 95 605 155 580 175 545 210 520 270 455 330 415M-5 650L30 740 60 785 120 820 160 825 235 850 335 850M-5 805L40 785M420 880L435 940 425 990 430 1040 350 1100 330 1160 330 1260 290 1330 300 1420 325 1485M575 880L600 900 680 918 740 915 780 928 820 915 960 830 970 815 1065 740 1090 740 1115 810 1110 860 1160 890 1175 920 1180 960 1200 1015M820 915L880 965 885 990 920 1015 990 1020 1020 1042 1055 1042 1100 1020 1175 1028 1245 980 1290 975 1340 985 1460 930 1535 888M920 1015L870 1030 855 1075 820 1115 760 1135 710 1165 520 1160 400 1220 180 1215 130 1238 95 1238 60 1272 -5 1275M820 1115L900 1150 940 1190 943 1260 975 1330M430 1220L460 1275 540 1360 580 1390 700 1455 710 1490M440 1490L710 1495 850 1475 930 1390M835 1480L835 1512M1020 1330L1080 1260 1140 1220 1220 1135 1260 1115 1330 1112 1535 1068M1200 1015L1260 1040 1330 1112 1350 1160 1320 1210 1325 1240 1280 1300 1280 1340 1245 1380 1240 1470 1215 1512',
    main: 'M0 150L80 100 150 70M190 45L250 60 330 45 300 5M1200 0L1195 100 1205 105 1185 200 1210 230 1175 250 1150 330 1110 345M1000 440L1000 500 1030 520 1035 540M400 430L360 500 370 535 425 545 425 585 455 580M490 580L515 610 530 660 510 740 495 830M490 890L435 920 435 1000 470 1060 485 1105 465 1140 395 1175 385 1240 355 1290 300 1370M1105 640L1105 700 1075 740M1115 820L1160 830 1170 860 1150 930 1165 1015 1145 1060 1160 1100 1230 1145 1220 1270 1230 1320 1215 1440M600 1510L720 1450 810 1445 850 1470 880 1490 1005 1410 1005 1380M1090 1250L1180 1175 1300 1130 1530 1090M370 300L375 200',
    minor: 'M75 175L78 250 0 295M75 175L150 180M75 250L150 255M250 70L245 100 180 180M155 210L240 240 270 240M270 210L320 265M245 240L205 370M405 325L460 320 490 350 530 350 545 305 560 320 650 310 635 290 645 260 635 210 590 145M485 350L495 380 475 430 500 435 500 460 530 480 525 510M650 310L725 335 760 345 820 320 830 280 890 240M725 335L720 400 680 440 675 510 660 530M830 40L835 150M1020 100L1060 80 1095 200 1075 255M1025 120L1010 200 1015 245M990 250L985 365 920 370 930 440 910 490 930 540M1215 235L1240 245 1225 310 1240 350 1225 380 1235 430M1210 230L1270 240 1280 225 1370 220 1400 255 1530 258M80 560L82 640M320 560L240 775M0 570L100 540 250 440 400 365M0 470L30 505 150 505M630 540L520 610M680 755L790 710M600 810L620 780M0 905L70 905 75 870 130 865 140 835M325 880L300 910 280 1000 215 1085 440 1105 560 1085 680 1085 700 1110M750 1110L740 1090 780 1050 860 1020M480 1060L520 1010 575 985 590 950 555 890M265 1090L260 1170 220 1230 230 1310 285 1340M490 1100L580 1180 580 1270M140 1240L220 1270M400 1250L490 1260 560 1280 580 1270 605 1300 595 1380M400 1210L395 1240 450 1290 450 1340 360 1400M750 1165L745 1190 800 1190 810 1240M660 1200L670 1300 725 1400 725 1450M860 910L870 940 750 955M960 1040L965 1080 1000 1140 1030 1150 1040 1190 1090 1200M1340 1190L1410 1150M1085 1295L1075 1370 1060 1430 1180 1405M1050 1430L1120 1512M1090 1300L1160 1330M680 1165L660 1210M1100 1080L1150 1075M590 900L690 875 700 910M930 830L1000 850 1020 820M1240 1310L1310 1270M400 -5L420 60M560 0L570 60M250 500L300 470 390 440M1000 400L1050 500 1080 560M1070 590L1180 540M1380 1130L1410 1090M40 1040L120 1060',
    border: 'M0 575L80 520 145 505 165 430 175 400 205 395 260 410 305 460 335 475 325 530 290 575 250 580 200 640 235 635 200 670 240 715 300 720 390 650 460 630 465 580 440 550 470 505 515 490 535 510 540 555 600 545 625 545 645 600 648 650 685 670 690 710 760 695 790 730 840 720 890 735 955 715 1025 760 1020 810 1050 830 1115 800 1120 770 1210 755 1225 715 1270 675 1310 670 1355 620 1358 550 1410 520 1415 485 1440 480 1440 400 1415 345 1455 310 1435 270 1435 240 1470 212 1530 245M1050 830L1060 860 1035 890 990 900 985 940 965 965 975 1040 1010 1080 1060 1095 1060 1135 1095 1135 1115 1190 1155 1200 1165 1270 1185 1290 1175 1370 1205 1410 1190 1450 1215 1512',
    ridges: [[590, 360, 60], [650, 420, 50], [560, 420, 40], [690, 260, 50], [790, 280, 50], [860, 240, 44], [780, 410, 50], [740, 110, 40], [1150, 150, 40], [1240, 120, 34], [1290, 180, 40], [970, 40, 30], [1240, 640, 60], [1190, 690, 50], [1270, 570, 40], [1490, 430, 50], [1460, 540, 40], [1390, 690, 30], [840, 1180, 50], [800, 1230, 40], [900, 1180, 40], [1120, 1140, 44], [540, 760, 30], [790, 750, 40], [1080, 540, 40], [1440, 1130, 40], [1370, 1300, 30], [1300, 1440, 30], [1110, 920, 26], [1500, 120, 30], [580, 480, 40], [920, 690, 40], [1510, 820, 30]],
  },
  {
    x: 1070, y: 1080,
    water: 'M790 200L860 185 930 190 975 215 1000 250 1060 210 1085 165 1075 140 1120 90 1200 60 1260 0 1518 0 1518 400 1480 410 1440 380 1430 350 1380 290 1330 240 1270 205 1210 215 1140 250 1060 310 990 315 950 270 930 240 900 215 840 210 790 235 770 250ZM0 670L40 655 50 635 85 613 90 620 50 665 30 690 70 695 85 720 100 735 120 755 105 775 60 760 35 770 35 755 0 745ZM1350 780L1400 750 1470 735 1518 705 1518 755 1450 760 1400 790 1385 825 1385 800 1360 790ZM1518 990L1470 970 1445 935 1435 955 1400 960 1430 985 1370 980 1370 1005 1440 1010 1460 1060 1475 1110 1480 1200 1480 1260 1400 1280 1420 1340 1450 1390 1440 1440 1460 1490 1490 1512 1518 1512ZM1115 1375L1120 1320 1140 1312 1140 1345ZM1460 610L1475 585 1480 610ZM880 820L888 830 880 842 872 830ZM955 575L985 560 970 575ZM110 1040L165 1035 120 1048ZM998 350L1025 350 1025 357 998 357ZM1440 385L1518 395 1518 420 1460 410Z',
    river: [['M590 410L640 370 680 350', 12], ['M610 340L690 270', 8], ['M470 500L530 420 575 415', 6], ['M300 738L325 705', 5], ['M930 10L910 0', 8], ['M1310 1275L1400 1282', 10], ['M1405 1080L1415 1050 1470 1045', 10]],
    park: 'M1145 890L1160 880 1175 900 1215 900 1225 855 1260 850 1270 885 1295 890 1275 960 1240 950 1170 925 1145 920ZM1055 1475L1130 1410 1145 1440 1185 1450 1170 1512 1100 1512ZM0 1160L60 1140 90 1160 80 1200 40 1235 10 1225ZM340 1320L350 1290 385 1290 385 1320ZM265 710L290 690 320 700 300 735ZM145 845L190 825 200 840 180 862ZM540 320L600 285 630 280 625 310 580 345 545 340ZM810 625L850 605 855 625 810 642ZM1140 620L1165 580 1160 610ZM1190 690L1215 670 1200 700ZM880 1490L920 1475 955 1500 890 1512ZM1330 1450L1350 1435 1365 1455 1340 1470ZM1360 1180L1395 1150 1410 1190 1380 1220ZM1270 400L1300 380 1390 400 1395 425 1290 415ZM135 770L165 750 160 775ZM1375 1100L1400 1070 1390 1110ZM1240 1470L1310 1480 1270 1490ZM0 1240L12 1250 0 1275ZM0 1285L10 1290 0 1310ZM260 1512L265 1495 270 1512Z',
    highway: 'M-5 95L20 60 20 20 0 -5M20 60L55 110 130 145 155 220M390 -5L415 120 470 185 510 205M580 -5L590 50 575 90M-5 385L30 355 80 330 210 332 300 312 385 322 470 288 540 290 580 295M580 250L580 320 605 360 660 390 715 385 740 340M605 360L600 400 560 435 515 460 505 490 340 620 260 700 180 745 100 720 80 695M180 745L150 810 90 855 -5 897M95 860L80 910 90 940 70 1040 80 1130 95 1160 95 1190 130 1240 155 1320 190 1340 250 1440 290 1440 340 1480 390 1505M70 1040L230 1020 300 990M-5 1060L70 1040M715 385L695 420 695 460 670 500 675 550 720 610 710 650 740 740 755 790 770 860 775 900 755 1020 830 1150 850 1200 880 1230M720 610L760 605 785 590 850 500 960 460 990 420M680 560L650 650 610 740 580 780 565 820 570 845 490 930M570 825L640 830 660 870M490 935L560 935 610 915 650 880 710 880 770 860 830 820 860 800 910 795 960 755 1010 725 1040 715 1130 720 1160 750 1190 730 1250 660 1290 640 1340 575 1350 500M630 715L690 690 715 670M850 490L895 580 905 660 940 710 945 760 990 810 985 960 1020 1030 1070 1110 1080 1155M968 -5L975 100 990 220 985 400 990 425 1020 470 1015 540 1020 600 1005 660 1010 740 1050 780 1035 820 1040 890 1120 980 1145 990 1230 1050M990 410L1060 412 1100 405 1150 430 1290 465 1350 490M1130 270L1145 310 1148 430M970 15L1100 40 1240 -5M1092 -5L1100 40 1195 180 1215 260 1280 270 1330 295 1345 330M970 20L900 75 840 110 780 160M980 170L880 180 780 190M845 180L860 260M1100 40L985 170M795 -5L720 70M1345 400L1340 540 1350 580 1420 590 1450 625 1518 655M1350 500L1380 545 1518 550M1415 590L1350 680 1340 760 1350 860 1290 910 1270 1030 1230 1050 1235 1250 1235 1440 1180 1490 1175 1512M1080 1160L1140 1160 1210 1230 1235 1250 1350 1248M1080 1150L980 1190 920 1190 880 1230 820 1250 700 1215 600 1200 510 1160 440 1100 415 1050 405 990M880 1230L920 1260 922 1370 955 1440 970 1512M600 1190L680 1080 755 1030M595 1210L570 1280 490 1310 475 1400 490 1460 550 1490 600 1512M490 1465L420 1512M1518 905L1480 930 1440 965 1425 1060 1440 1120 1430 1180M1390 1260L1410 1330 1415 1450 1345 1512M700 230L680 250 700 285 720 300M765 180L770 235 730 240M715 340L790 340 850 370 900 400M1450 440L1500 520M560 80L600 150',
    main: 'M0 1095L100 1060M510 200L540 50 575 15M600 345L560 350 505 380 480 430 480 480M505 495L410 545 365 600M125 850L135 880 160 890 165 920 215 940 220 960M290 1005L300 1025 400 1040 480 1075 500 1110 580 1135 600 1170M610 810L650 830M890 440L960 435M1060 410L1090 350 1180 310 1300 310M1090 350L1150 335 1340 340M1010 740L1090 790 1070 820 1075 860 1070 930 1100 1000 1150 1015 1145 1150M1135 1010L1140 1130M840 60L880 60 880 10M1240 1290L1260 1330 1320 1340 1290 1395 1250 1430M520 1430L540 1480M1020 430L1010 430 1025 470M1145 1150L1210 1210',
    minor: 'M130 150L215 80 270 85 305 75 320 20M155 215L180 260 215 280 210 420 245 480 290 490M245 485L220 540 150 545 95 620 40 690M310 510L350 540 350 600M365 40L370 90 330 140 330 180 310 190 345 280M430 320L435 400 380 450 290 500 250 480M365 640L415 710 470 735 480 790 560 800M520 500L580 535 615 520 635 440 690 420M490 800L440 860M530 605L600 640 700 640M610 655L700 655M640 580L620 640M715 560L710 530 740 500M1150 430L1155 540 1175 560 1175 600 1205 655M1250 380L1280 290M1100 370L1260 400M1190 310L1170 430M1110 770L1200 840 1280 820 1340 840 1400 820 1440 780 1518 760M1360 860L1410 880 1420 900 1518 860M680 915L690 960 665 1030 620 1040M760 1020L830 1060 890 1085 1010 1030M865 1085L870 1110 920 1110 925 1140 950 1150M780 1100L720 1150 715 1180M945 1200L960 1260 940 1290M1270 1030L1340 1015 1440 1020 1445 1100M660 1210L670 1230 750 1250 790 1270 830 1260M440 1150L330 1240 335 1340 270 1410M190 1345L270 1400M0 260L30 260 40 320 80 330M80 1512L135 1340M75 1060L110 1130 90 1150M435 1150L600 1180M560 1340L540 1410M920 1300L960 1370 930 1380M980 1440L960 1480M1150 1310L1235 1300M580 830L590 880 540 890M670 890L740 910 740 960M1050 690L1050 720M470 190L500 230 540 240M640 280L650 345M1300 30L1518 20M1100 60L900 150 780 165M1140 770L1090 790M1270 1450L1240 1512M130 700L170 710 150 740M860 560L920 580 910 640M770 1020L820 1060',
    mesh: 'M650 170L760 220M660 300L720 310 800 310M610 340L690 330M700 250L770 210M640 200L660 250M1390 440L1518 510M1400 400L1450 520M1350 470L1420 520M1430 480L1518 440M1240 1220L1380 1220M1250 1290L1240 1330',
    border: 'M260 0L250 30 215 5 180 40 130 50 135 110 180 110 190 190 220 210 160 220 120 255 60 245 0 240',
    ridges: [[200, 190, 40], [240, 230, 40], [290, 160, 40], [60, 280, 50], [240, 620, 40], [350, 690, 34], [420, 640, 50], [490, 570, 30], [230, 760, 36], [150, 610, 20], [800, 700, 50], [840, 760, 40], [740, 660, 26], [870, 620, 26], [930, 860, 30], [890, 910, 34], [650, 980, 40], [720, 1000, 40], [920, 1130, 34], [860, 1170, 40], [1000, 1140, 40], [1060, 1220, 40], [830, 1310, 50], [740, 1310, 40], [870, 1380, 40], [1030, 1330, 40], [1090, 1370, 40], [630, 1340, 50], [680, 1430, 50], [350, 1420, 44], [400, 1380, 40], [90, 1320, 40], [220, 1240, 30], [170, 1400, 30], [1210, 840, 40], [1100, 880, 40], [1180, 1000, 40], [1090, 560, 44], [1240, 520, 30], [1110, 640, 34], [930, 550, 26], [780, 480, 30], [820, 1440, 40], [450, 1240, 30], [1300, 990, 30], [560, 1080, 30], [140, 1180, 24], [270, 1350, 24]],
  },
];

// Each entry: size, sheet origin, latin rows [text, left, right, baseline],
// chinese row [text, left, right, baseline], marker [x, y].
const LABELS = [
  { s: 'mid', o: 0, m: [278, 24] },
  { s: 'small', o: 0, zh: ['阜阳市', 1162, 1372, 70], m: [1271, 102] },
  { s: 'mid', o: 0, en: [['Xinyang', 178, 452, 461]], zh: ['信阳市', 198, 427, 549], m: [315, 587] },
  { s: 'mid', o: 0, en: [['u', 22, 60, 761]], zh: ['市', -40, 36, 842] },
  { s: 'mid', o: 0, en: [['Xiaogan', 100, 382, 1258]], zh: ['孝感市', 125, 355, 1347], m: [241, 1385] },
  { s: 'big', o: 0, en: [['Wuhan', 295, 570, 1457]], zh: ['武汉市', 308, 552, 1555], m: [435, 1596] },
  { s: 'mid', o: 1, zh: ['蚌埠市', 488, 715, 47], m: [606, 86] },
  { s: 'small', o: 1, en: [['Huainan', 260, 522, 165]], zh: ['淮南市', 287, 498, 243], m: [392, 276] },
  { s: 'big', o: 1, en: [['Hefei', 413, 625, 660]], zh: ['合肥市', 394, 640, 758], m: [520, 801] },
  { s: 'small', o: 1, en: [["Lu'an", 45, 212, 748]], zh: ['六安市', 20, 232, 826], m: [130, 859] },
  { s: 'big', o: 1, en: [['Nanjing', 1230, 1538, 507]], zh: ['南京市', 1265, 1510, 604], m: [1386, 648] },
  { s: 'mid', o: 1, en: [["Ma'anshan", 1037, 1412, 774]], zh: ['马鞍山市', 1076, 1382, 862], m: [1225, 899] },
  { s: 'small', o: 1, en: [['Wuhu', 1092, 1275, 993]], zh: ['芜湖市', 1076, 1288, 1073], m: [1186, 1106] },
  { s: 'tiny', o: 1, en: [['Tongling', 717, 970, 1266]], zh: ['铜陵市', 745, 938, 1340], m: [843, 1371] },
  { s: 'small', o: 1, en: [['Xuancheng', 1187, 1545, 1263]], zh: ['宣城市', 1259, 1470, 1341], m: [1368, 1374] },
  { s: 'small', o: 1, en: [['Anqing', 343, 567, 1526]], zh: ['安庆市', 348, 560, 1605], m: [457, 1637] },
  { s: 'small', o: 1, en: [['Chizhou', 684, 942, 1537]], zh: ['池州市', 683, 895, 1616], m: [664, 1556] },
  { s: 'mid', o: 2, en: [['Taizhou', 370, 645, 264]], zh: ['泰州市', 395, 625, 351], m: [510, 389] },
  { s: 'big', o: 2, en: [['Nantong', 873, 1217, 560]], zh: ['南通市', 920, 1168, 657], m: [1044, 700] },
  { s: 'big', o: 2, en: [['Changzhou', 310, 766, 668]], zh: ['常州市', 412, 658, 765], m: [538, 809] },
  { s: 'big', o: 2, en: [['Wuxi', 627, 818, 876]], zh: ['无锡市', 598, 844, 973], m: [723, 1016] },
  { s: 'big', o: 2, en: [['Shanghai', 1180, 1556, 1046]], zh: ['上海市', 1244, 1488, 1144], m: [1367, 1186] },
  { s: 'big', o: 2, en: [['Suzhou', 727, 1025, 1241]], zh: ['苏州市', 752, 998, 1338], m: [873, 1141] },
  { s: 'mid', o: 3, en: [['Huanggang', 547, 947, 244]], zh: ['黄冈市', 631, 860, 332], m: [748, 154] },
  { s: 'mid', o: 3, en: [['Xianning', 290, 590, 421]], zh: ['咸宁市', 328, 557, 509], m: [444, 547] },
  { s: 'mid', o: 3, en: [['Jiujiang', 1237, 1507, 507]], zh: ['九江市', 1256, 1485, 595], m: [1371, 632] },
  { s: 'mid', o: 3, en: [['Nanchang', 1117, 1468, 1155]], zh: ['南昌市', 1178, 1408, 1243], m: [1294, 1280] },
  { s: 'small', o: 4, en: [['Huangshan', 948, 1312, 435], ['City', 1072, 1192, 515]], zh: ['黄山市', 1025, 1237, 596], m: [1133, 629] },
  { s: 'mid', o: 4, en: [['Jingdezhen', 290, 690, 786]], zh: ['景德镇市', 337, 643, 874], m: [492, 911] },
  { s: 'mid', o: 4, en: [['Quzhou', 1287, 1550, 972]], zh: ['衢州市', 1304, 1534, 1061], m: [1420, 1098] },
  { s: 'mid', o: 4, en: [['Shangrao', 750, 1078, 1301]], zh: ['上饶市', 800, 1028, 1389], m: [914, 1425] },
  { s: 'small', o: 4, en: [['Yingtan', 310, 552, 1436]], zh: ['鹰潭市', 325, 536, 1514] },
  { s: 'big', o: 5, en: [['Hangzhou', 430, 840, 131]], zh: ['杭州市', 512, 758, 229], m: [639, 271] },
  { s: 'mid', o: 5, en: [['Shaoxing', 712, 1032, 325]], zh: ['绍兴市', 758, 988, 412], m: [875, 450] },
  { s: 'big', o: 5, en: [['Ningbo', 1261, 1556, 390]], zh: ['宁波市', 1281, 1527, 488], m: [1404, 530] },
  { s: 'big', o: 5, en: [['Jinhua', 220, 490, 891]], zh: ['金华市', 234, 480, 989], m: [356, 1031] },
  { s: 'big', o: 5, en: [['Taizhou', 1173, 1497, 1160]], zh: ['台州市', 1215, 1460, 1258], m: [1335, 1300] },
  { s: 'mid', o: 5, en: [['Lishui', 406, 610, 1288]], zh: ['丽水市', 395, 625, 1376], m: [510, 1414] },
  { s: 'big', o: 5, en: [['Wenzhou', 748, 1130, 1566]] },
];

const shard = ([x, y, r]) =>
  `M${x - r * 0.5} ${y + r * 0.5}L${x - r * 0.2} ${y - r * 0.2} ${x + r * 0.5} ${y - r * 0.5} ${x + r * 0.4} ${y + r * 0.1} ${x} ${y + r * 0.2}Z`;

const sheetTransform = (s) => `translate(${s.x} ${s.y}) scale(${1 / 3})`;

function Terrain({ sheet }) {
  return (
    <g transform={sheetTransform(sheet)}>
      <Ridge d={sheet.ridges.map(shard).join('')} />
      <Park d={sheet.park || ''} />
      <Water d={sheet.water} />
      {(sheet.river || []).map(([d, w]) => <River key={d} d={d} $w={w} />)}
      {sheet.islands && <Park d={sheet.islands} />}
    </g>
  );
}

function Roads({ sheet }) {
  return (
    <g transform={sheetTransform(sheet)}>
      <Road d={sheet.minor} $color="#fae3a8" $w={4.5} />
      <Road d={sheet.mesh || ''} $color="#ffe69b" $w={7} />
      <Road d={sheet.main} $color="#f8d477" $w={6.5} />
      <Road d={sheet.highway} $color="#f8d884" $w={18.5} $cap="round" />
      <Road d={sheet.highway} $color="#ffe798" $w={12.5} $cap="round" />
      <Border d={sheet.border} />
    </g>
  );
}

function PlaceRow({ row, origin, size, fontSize, weight, dx = 0, dy = 0 }) {
  const [text, left, right, base] = row;
  const width = (right - left) / 3;
  return (
    <LabelText
      x={origin.x + left / 3 + dx}
      y={origin.y + base / 3 + dy}
      textLength={text.length > 1 ? width - dx : undefined}
      lengthAdjust="spacingAndGlyphs"
      $size={fontSize}
      $weight={weight}
      $color={size.color}
    >
      {text}
    </LabelText>
  );
}

function Place({ place }) {
  const size = SIZES[place.s];
  const origin = SHEETS[place.o];
  return (
    <g>
      {(place.en || []).map((row) => (
        <PlaceRow key={row[0]} row={row} origin={origin} size={size} fontSize={size.latin} weight={size.weight} dx={-1} />
      ))}
      {place.zh && <PlaceRow row={place.zh} origin={origin} size={size} fontSize={size.zh} weight={400} dy={0.7} />}
      {place.m && (
        <Ring cx={origin.x + place.m[0] / 3} cy={origin.y + place.m[1] / 3} r={size.r - 0.5} $ring={size.ring} $color={place.s === 'big' ? '#1c1c1c' : size.color} />
      )}
    </g>
  );
}

function JamaahMap() {
  return (
    <MapView viewBox="68 572 1508 1012">
      {SHEETS.map((s) => <Terrain key={`${s.x}-${s.y}`} sheet={s} />)}
      {SHEETS.map((s) => <Roads key={`${s.x}-${s.y}`} sheet={s} />)}
      {LABELS.map((l, i) => <Place key={i} place={l} />)}
    </MapView>
  );
}

export default function App() {
  return (
    <Page>
      <GlobalStyle />
      <Header>
        <MenuButton aria-label="Menu">
          <MenuBar />
          <MenuBar />
          <MenuBar />
        </MenuButton>
        <Title>Manajemen</Title>
        <Avatar viewBox="0 0 144 137">
          <ellipse cx="72" cy="68.3" rx="68" ry="64.3" fill="#c4c4c4" stroke="#609f55" strokeWidth="8" />
          <ellipse cx="72" cy="41" rx="24.3" ry="23" fill="#4f4f4f" />
          <path d="M30.7 112V87C30.7 71 44 59.5 59 59.5H86C100 60 113.3 72 113.3 87V112C103 116.500 88 118.700 74 118.700C59 118.700 43 116 30.700 112Z" fill="#4f4f4f" />
        </Avatar>
      </Header>
      <Main>
        <SectionTitle>Peta Sebaran Jama’ah</SectionTitle>
        <JamaahMap />
        <AddButton>
          Tambah
          <PlusIcon viewBox="0 0 44 44">
            <path d="M12.700 0H31.700V12.700H44V31.700H31.700V44H12.700V31.700H0V12.700H12.700Z" fill="#fff" />
          </PlusIcon>
        </AddButton>
        <TablePanel>Tabel</TablePanel>
      </Main>
    </Page>
  );
}
